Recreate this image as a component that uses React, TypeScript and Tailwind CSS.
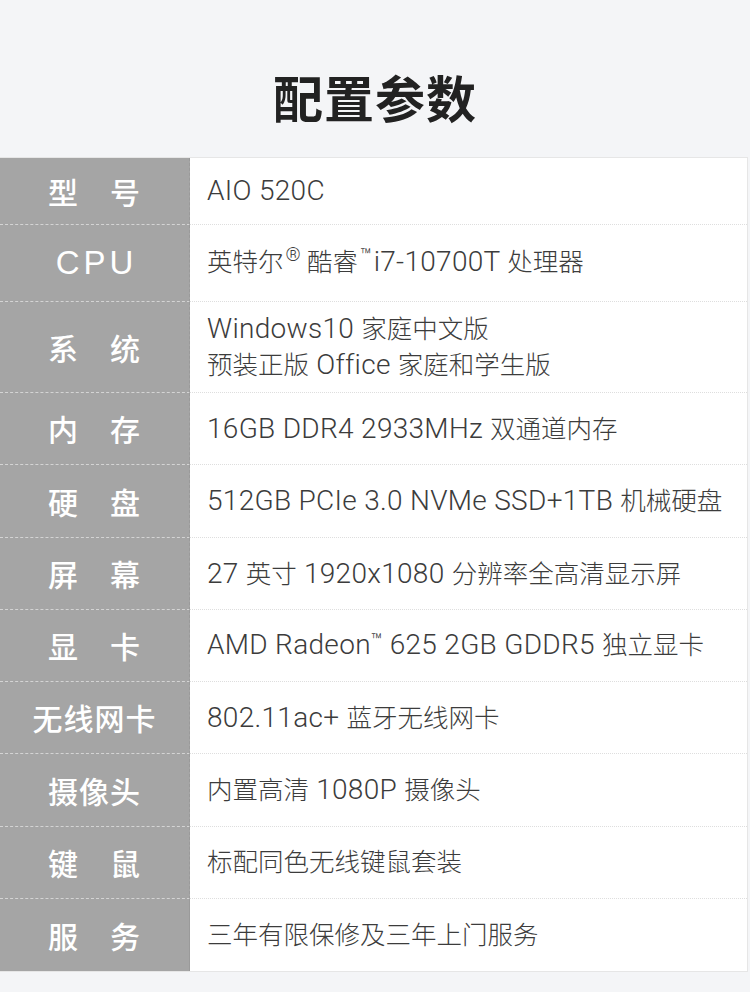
import React from 'react';

interface Spec {
  label: string;
  value: React.ReactNode;
  h: string;
  wide?: boolean;
}

// latin runs sit a bit larger than the CJK ones, like the original artwork
const Mixed: React.FC<{ text: string }> = ({ text }) => {
  const parts = text.split(/([\u4e00-\u9fff\u3000-\u303f]+)/).filter(Boolean);
  return (
    <>
      {parts.map((p, i) =>
        /[\u4e00-\u9fff]/.test(p) ? (
          <span key={i}>{p}</span>
        ) : (
          <span key={i} className="text-[28px] tracking-[0.3px]">
            {p}
          </span>
        )
      )}
    </>
  );
};

const specs: Spec[] = [
  { label: '型\u3000号', value: <Mixed text="AIO 520C" />, h: 'h-[67px]' },
  {
    label: 'CPU',
    wide: true,
    value: (
      <>
        英特尔<span className="text-[19px] relative -top-[10px] ml-[2px]">®</span> 酷睿
        <span className="text-[19px] relative -top-[9px] mx-[2px]">™</span>
        <Mixed text="i7-10700T " />处理器
      </>
    ),
    h: 'h-[77px]',
  },
  {
    label: '系\u3000统',
    value: (
      <>
        <div>
          <Mixed text="Windows10 家庭中文版" />
        </div>
        <div>
          <Mixed text="预装正版 Office 家庭和学生版" />
        </div>
      </>
    ),
    h: 'h-[91px]',
  },
  { label: '内\u3000存', value: <Mixed text="16GB DDR4 2933MHz 双通道内存" />, h: 'h-[72px]' },
  { label: '硬\u3000盘', value: <Mixed text="512GB PCIe 3.0 NVMe SSD+1TB 机械硬盘" />, h: 'h-[73px]' },
  { label: '屏\u3000幕', value: <Mixed text="27 英寸 1920x1080 分辨率全高清显示屏" />, h: 'h-[72px]' },
  {
    label: '显\u3000卡',
    value: (
      <>
        <Mixed text="AMD Radeon" />
        <span className="text-[19px] relative -top-[7px]">™</span>
        <Mixed text=" 625 2GB GDDR5 独立显卡" />
      </>
    ),
    h: 'h-[72px]',
  },
  { label: '无线网卡', value: <Mixed text="802.11ac+ 蓝牙无线网卡" />, h: 'h-[72px]' },
  { label: '摄像头', value: <Mixed text="内置高清 1080P 摄像头" />, h: 'h-[73px]' },
  { label: '键\u3000鼠', value: '标配同色无线键鼠套装', h: 'h-[72px]' },
  { label: '服\u3000务', value: '三年有限保修及三年上门服务', h: 'h-[72px]' },
];

const App: React.FC = () => {
  return (
    <div
      className="w-[750px] h-[992px] bg-[#f4f5f7] overflow-hidden"
      style={{ fontFamily: 'Roboto, "Noto Sans CJK SC", sans-serif' }}
    >
      {/* Title */}
      <div className="h-[157px] flex items-center justify-center pt-[34px]">
        <h1 className="text-[50px] font-bold text-[#222] tracking-[1px] leading-none" style={{ fontFamily: '"Noto Sans CJK SC", sans-serif' }}>
          配置参数
        </h1>
      </div>

      {/* Spec table */}
      <div className="w-[748px] bg-white border-t border-r border-b border-[#e6e6e6]">
        {specs.map((s, i) => {
          const last = i === specs.length - 1;
          return (
            <div key={i} className={`flex ${s.h}`}>
              <div
                className={`w-[190px] shrink-0 bg-[#a5a5a5] flex items-center justify-center text-white border-r border-[#9a9a9a] ${
                  last ? '' : 'border-b border-dashed border-b-[#d4d4d4]'
                } ${s.wide ? 'text-[33px] tracking-[4px] pl-[4px]' : 'text-[30px] font-medium tracking-[1px]'}`}
                style={{ fontFamily: s.wide ? '"Liberation Sans", sans-serif' : '"Noto Sans CJK SC", sans-serif' }}
              >
                {s.label}
              </div>
              <div
                className={`flex-1 flex flex-col justify-center pl-[17px] text-[25.5px] leading-[35px] text-[#3c3c3c] font-light ${
                  last ? '' : 'border-b border-dotted border-[#dedede]'
                }`}
              >
                <div>{s.value}</div>
              </div>
            </div>
          );
        })}
      </div>
    </div>
  );
};

export default App;
